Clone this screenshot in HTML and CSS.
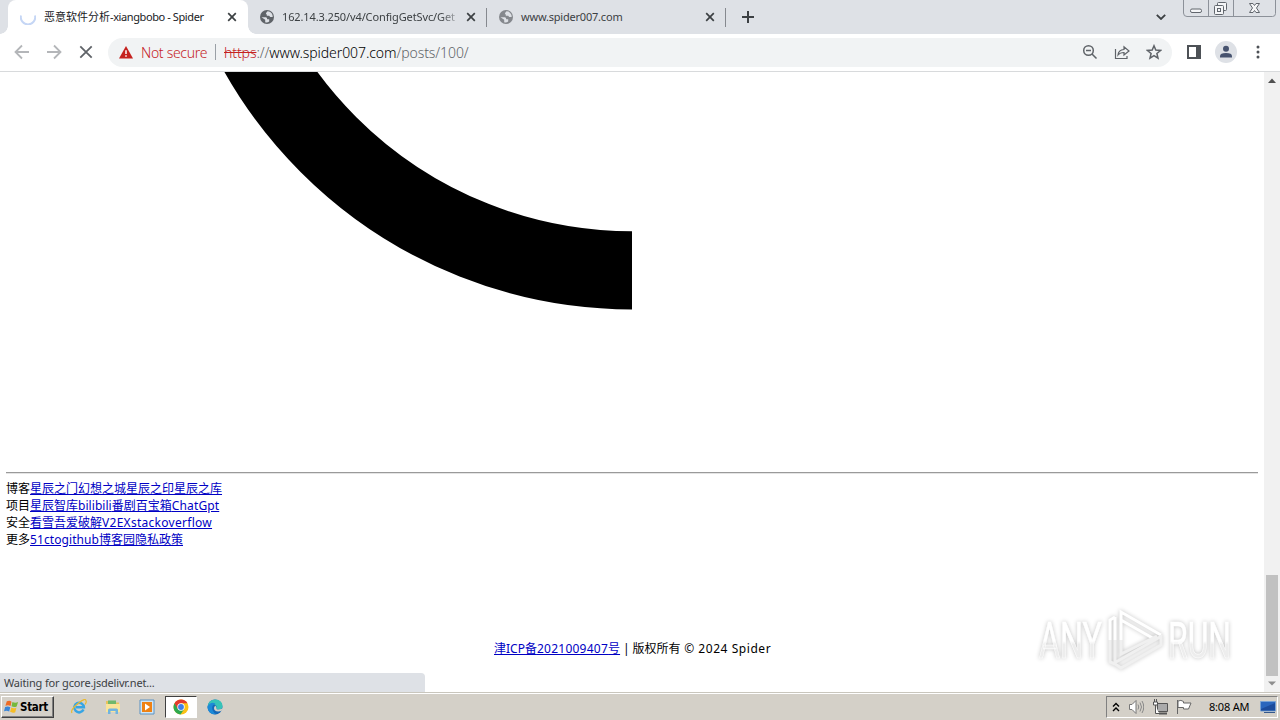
FILE: index.html
```html
<!DOCTYPE html>
<html lang="zh-CN">
<head>
<meta charset="utf-8">
<title>恶意软件分析-xiangbobo - Spider</title>
<link rel="stylesheet" href="styles.css">
</head>
<body>
<div class="screen">
  <header class="tabstrip">
    <div class="tab active">
      <svg class="fav" viewBox="0 0 16 16"><path d="M1 6.500A7.200 7.200 0 1 0 15 6.500" fill="none" stroke="#c5d6f5" stroke-width="2"/></svg>
      <span class="title t1"><span class="zh">恶意软件分析</span><span class="lat">-xiangbobo - Spider</span></span>
      <svg class="close" viewBox="0 0 10 10"><path d="M1.200 1.200l7.600 7.600M8.800 1.200L1.200 8.800"/></svg>
    </div>
    <div class="tab second">
      <svg class="fav" viewBox="0 0 16 16"><circle cx="8" cy="8" r="7" fill="#5f6368"/><path d="M2.500 8.200h4.300q1.500.2 1.400 2h2v2.400q-2 1.500-4 .7v-2.500zM8.500 2.300q3.500 0 5 3.600l.2 2h-2.500l-1-1.200H7.800V5.300h-1q.1-1.700 1.700-3z" fill="#dee1e6"/></svg>
      <span class="title t2">162.14.3.250/v4/ConfigGetSvc/Get</span>
      <svg class="close" viewBox="0 0 10 10"><path d="M1.200 1.200l7.600 7.600M8.800 1.200L1.200 8.800"/></svg>
    </div>
    <div class="tab third">
      <svg class="fav" viewBox="0 0 16 16"><circle cx="8" cy="8" r="7" fill="#85888d"/><path d="M2.500 8.200h4.300q1.500.2 1.400 2h2v2.400q-2 1.500-4 .7v-2.500zM8.500 2.300q3.500 0 5 3.600l.2 2h-2.500l-1-1.200H7.800V5.300h-1q.1-1.700 1.700-3z" fill="#dee1e6"/></svg>
      <span class="title t3">www.spider007.com</span>
      <svg class="close" viewBox="0 0 10 10"><path d="M1.200 1.200l7.600 7.600M8.800 1.200L1.200 8.800"/></svg>
    </div>
    <svg class="newtab" viewBox="0 0 12 12"><path d="M6 0v12M0 6h12"/></svg>
    <svg class="chev" viewBox="0 0 10 6"><path d="M.8.8L5 5 9.200.8"/></svg>
    <svg class="winbtns" viewBox="0 0 97 17">
      <path d="M.5 0v13q0 3.500 3.500 3.500h85.500q3 0 3-3V0M25.500 0v16M50.500 0v16" fill="none" stroke="#8c9199"/>
      <g fill="#f4f5f7" stroke="#61666d"><rect x="7.500" y="9" width="11" height="3.500" rx="1.500"/><rect x="34.500" y="2.500" width="9" height="8" rx="1"/><rect x="31.500" y="5.500" width="9" height="9" rx="1"/><rect x="34.500" y="8.500" width="3" height="3"/><path d="M66.500 3.500h3.500l1.500 2 1.500-2h3.500l-3 4.500 3 4.500H73l-1.500-2-1.500 2h-3.500l3-4.500z"/></g>
    </svg>
  </header>

  <nav class="toolbar">
    <svg class="nav" viewBox="0 0 16 16"><path d="M15 8H2M8 1.500L1.500 8 8 14.500" stroke="#b4b6b9"/></svg>
    <svg class="nav" viewBox="0 0 16 16"><path d="M1 8h13M8 1.500L14.500 8 8 14.500" stroke="#b4b6b9"/></svg>
    <svg class="nav" viewBox="0 0 16 16"><path d="M2.300 2.300l11.400 11.400M13.700 2.300L2.300 13.700" stroke="#5f6368"/></svg>
    <div class="omnibox">
      <svg class="warn" viewBox="0 0 14 13"><path d="M7 0l7 12.500H0z" fill="#c5221f"/><path d="M7 4.300v3.700M7 9.200v1.600" stroke="#fff" stroke-width="1.500"/></svg>
      <span class="insecure">Not secure</span>
      <span class="sep"></span>
      <span class="url"><span class="scheme">https</span><span class="dim">://</span>www.spider007.com<span class="dim">/posts/100/</span></span>
      <svg class="act zoomout" viewBox="0 0 16 16"><circle cx="6.500" cy="6.500" r="4.800"/><path d="M4 6.500h5M10 10l4.500 4.500"/></svg>
      <svg class="act share" viewBox="0 0 16 16"><path d="M1.500 5v9.500h11.500V12M4 11q.4-5 6-5.500V2.700L15 7l-5 4V8.500Q6 8.500 4 11z"/></svg>
      <svg class="act star" viewBox="0 0 16 16"><path d="M8 1.800l1.800 4.300 4.700.4-3.600 3 1.100 4.600L8 11.700l-4 2.400 1.100-4.600-3.600-3 4.700-.4z"/></svg>
    </div>
    <svg class="panel" viewBox="0 0 14 14"><path d="M1 1h12v12H1z" fill="none" stroke="#4d5156" stroke-width="2"/><path d="M9 0h5v14H9z" fill="#4d5156"/></svg>
    <svg class="avatar" viewBox="0 0 22 22"><circle cx="11" cy="11" r="11" fill="#dee1e6"/><circle cx="11" cy="7.800" r="3" fill="#47536f"/><path d="M5 16.500v-1.300q0-3.200 6-3.200t6 3.200v1.300z" fill="#47536f"/></svg>
    <svg class="more" viewBox="0 0 4 14"><circle cx="2" cy="2" r="1.500"/><circle cx="2" cy="7" r="1.500"/><circle cx="2" cy="12" r="1.500"/></svg>
  </nav>

  <div class="viewport">
    <main class="page">
      <svg class="arc" viewBox="0 0 632 400"><circle cx="632" cy="-231" r="429.300" fill="none" stroke="#000" stroke-width="78.200"/></svg>
      <hr class="rule">
      <div class="links">
        <div class="row">博客<a>星辰之门幻想之城星辰之印星辰之库</a></div>
        <div class="row">项目<a>星辰智库<span class="l1">bilibili</span>番剧百宝箱<span class="l2">ChatGpt</span></a></div>
        <div class="row">安全<a>看雪吾爱破解<span class="l3">V2EXstackoverflow</span></a></div>
        <div class="row">更多<a><span class="l4">51ctogithub</span>博客园隐私政策</a></div>
      </div>
      <footer class="footer"><a>津ICP备<span class="f2">2021009407</span>号</a><span class="f3"> | </span>版权所有<span class="f4"> © 2024 Spider</span></footer>
    </main>
    <div class="scrollbar">
      <svg class="arrow" viewBox="0 0 16 16"><path d="M4 11l4-4.500 4 4.500z" fill="#505050"/></svg>
      <div class="thumb"></div>
      <svg class="arrow" viewBox="0 0 16 16"><path d="M4 5.500l4 4 4-4z" fill="#8d8d8d"/></svg>
    </div>
    <div class="status">Waiting for gcore.jsdelivr.net...</div>
    <svg class="watermark" viewBox="0 0 210 80">
      <defs><linearGradient id="fade" x1="0" y1="0" x2="0" y2="1"><stop offset=".5" stop-color="#fff"/><stop offset=".56" stop-color="#ededed"/></linearGradient></defs>
      <g class="mark">
        <text x="9" y="58" textLength="63" lengthAdjust="spacingAndGlyphs">ANY</text>
        <text x="138" y="58" textLength="63" lengthAdjust="spacingAndGlyphs">RUN</text>
        <path d="M80 40V20l5-3M85 40V17M91 40V12l40 23M91 20l35 20"/>
        <path class="low" d="M80 40v22l5 2M85 40v24l6 4 40-23V35M91 40v14l36-18M86 62l44-25"/>
      </g>
    </svg>
  </div>

  <div class="taskbar">
    <div class="start">
      <svg viewBox="0 0 16 16"><path d="M3 2.500q3-1.500 5 .3L7 7.500Q4.500 6 1.500 7.300z" fill="#ee6c25"/><path d="M9 3.300q3 1.500 6 0L13.500 8q-3 1.200-5.500-.3z" fill="#76b83b"/><path d="M1.200 8.500q3-1.200 5.500.3l-1.200 4.500Q3 12 0 13z" fill="#3a86d8"/><path d="M7.800 9q2.500 1.400 5.400.2L12 14q-2.800 1.200-5.500-.3z" fill="#f6bd25"/></svg>
      <span>Start</span>
    </div>
    <div class="quick">
      <svg viewBox="0 0 16 16"><path d="M12.500 10.500a4.800 4.800 0 1 1 .4-2.200H5" fill="none" stroke="#37a5e4" stroke-width="2.500"/><path d="M1 14Q-1 11 7 4.500T15 2q.8 1-1 3.500" fill="none" stroke="#e9b92f" stroke-width="1.200"/></svg>
    </div>
    <div class="quick">
      <svg viewBox="0 0 16 16"><path d="M1 2h5l1 1.500h7V13H1z" fill="#e8c25c"/><path d="M3 1.500h8V6H3z" fill="#6fb86c"/><path d="M1 5h14v8H1z" fill="#f9e49a"/><path d="M3 15v-4q0-1.500 1.500-1.500h7Q13 9.500 13 11v4h-2.500v-3h-5v3z" fill="#71b4df"/></svg>
    </div>
    <div class="quick">
      <svg viewBox="0 0 16 16"><path d="M1 1h14v14H1z" fill="#cfe5f5" stroke="#5b93c4"/><path d="M3 3h10v10H3z" fill="#ee8214"/><path d="M6 4.500l5 3.500-5 3.500z" fill="#fff"/></svg>
    </div>
    <div class="quick pressed">
      <svg viewBox="0 0 16 16"><circle cx="8" cy="8" r="7.500" fill="#fbc116"/><path d="M1.500 4.250A7.500 7.500 0 0 0 7.500 15.500L11.250 9.900 8 8H4.750z" fill="#2da94f"/><path d="M1.500 4.250A7.500 7.500 0 0 1 14.500 4.250H8L4.750 9.900z" fill="#e33b2e"/><circle cx="8" cy="8" r="3.700" fill="#fff"/><circle cx="8" cy="8" r="2.900" fill="#3f7fe8"/></svg>
    </div>
    <div class="quick">
      <svg viewBox="0 0 16 16"><circle cx="8" cy="8" r="7.500" fill="#1568b8"/><path d="M.6 7.500Q1.500.5 8.500.5q6.800.5 7 6.500 0 3.500-4 3.500-2.500 0-2-1.500Q10 5.500 6 5.200 2.500 5 .6 7.500z" fill="#36c3b8"/><path d="M.6 7.500Q3.500 2 8.500 4.500 4 6 5.500 11q1 3 4 4.200Q2 16 .6 9z" fill="#1c8ad8"/><path d="M7 9q0 4.500 7.500 3L16 8.500q-1 2-4.500 2-2.500 0-2-1.500L8.500 6.500Q7 7.500 7 9z" fill="#d4d0c8"/></svg>
    </div>
    <div class="tray">
      <svg class="up" viewBox="0 0 8 10"><path d="M1 4.500l3-3 3 3M1 9l3-3 3 3"/></svg>
      <svg class="ti" viewBox="0 0 16 16"><path d="M1.500 5.500h2.500l4-4v13l-4-4H1.500z" fill="#fff" stroke="#777"/><path d="M10 5.500q1.500 2.500 0 5M12 3.500q3 4.500 0 9M14 2q3.500 6 0 12" fill="none" stroke="#888"/></svg>
      <svg class="ti" viewBox="0 0 16 16"><path d="M5.500 4.500h10v8h-10z" fill="#aaa" stroke="#555"/><path d="M7 14.500h8" stroke="#555" stroke-width="2"/><path d="M1.500 3v3h4V3zM2.500 0v3M4.500 0v3M3.500 6v8.500H7" fill="#fff" stroke="#555"/></svg>
      <svg class="ti" viewBox="0 0 16 16"><path d="M1.500 1v14M2 2q3-1.500 5.500.5v1.500h7.500L12.500 10H7.500V8.500H2z" fill="#fff" stroke="#666"/></svg>
      <span class="clock">8:08 AM</span>
      <svg class="desk" viewBox="0 0 16 14"><path d="M.5 1.500h15v9.500H.5z" fill="#2b66bd" stroke="#79a2d4"/><path d="M1 9L15 3v7.500H1z" fill="#1d4c9c"/><path d="M4 12.500h11" stroke="#35588c"/></svg>
    </div>
  </div>
</div>
</body>
</html>
```
FILE: styles.css
```css
* { box-sizing: border-box; }
body { margin: 0; font-family: "Noto Sans", "Noto Sans CJK SC", sans-serif; font-size: 12px; color: #000; }
svg { display: block; flex: none; }
.screen { width: 1280px; height: 720px; overflow: hidden; display: flex; flex-direction: column; background: #fff; }

.tabstrip { height: 34px; flex: none; display: flex; align-items: center; background: #dee1e6; color: #3c4043; }
.tab { display: flex; align-items: center; height: 34px; flex: none; }
.active { width: 240px; margin-left: 8px; padding-left: 12px; background: #fff; border-radius: 8px 8px 0 0; color: #202124; position: relative; }
.active::before, .active::after { content: ""; position: absolute; bottom: 0; width: 8px; height: 8px; }
.active::before { left: -8px; background: radial-gradient(circle at 0 0, #dee1e6 7.5px, #fff 8px); }
.active::after { right: -8px; background: radial-gradient(circle at 100% 0, #dee1e6 7.5px, #fff 8px); }
.second, .third { width: 239px; padding-left: 11px; }
.second::after, .third::after { content: ""; width: 1px; height: 19px; background: #86898f; margin-left: auto; }
.fav { width: 16px; height: 16px; margin-right: 8px; }
.second .fav, .third .fav { margin-right: 7px; }
.title { width: 178px; height: 18px; line-height: 18px; white-space: nowrap; flex: none; font-size: 11px; margin-right: 6px; }
.t1 { width: 183px; margin-right: 0; }
.lat { letter-spacing: -.4px; }
.t2 { letter-spacing: -.12px; -webkit-mask-image: linear-gradient(90deg, #000 158px, transparent 182px); mask-image: linear-gradient(90deg, #000 158px, transparent 182px); }
.t3 { letter-spacing: -.2px; }
.close { width: 10px; height: 10px; fill: none; stroke: #3c4043; stroke-width: 1.7; }
.newtab { width: 12px; height: 12px; margin-left: 16px; fill: none; stroke: #3c4043; stroke-width: 2; }
.chev { width: 10px; height: 6px; margin-left: auto; fill: none; stroke: #3c4043; stroke-width: 1.8; }
.winbtns { width: 97px; height: 17px; margin-left: 17px; align-self: flex-start; }

.toolbar { height: 38px; flex: none; display: flex; align-items: center; border-bottom: 1px solid #d8dadc; padding: 0 20px 1px 14px; }
.nav { width: 16px; height: 16px; margin-right: 16px; fill: none; stroke-width: 1.8; }
.nav + .nav + .nav { margin-right: 14px; }
.omnibox { width: 1064px; height: 29px; border-radius: 15px; background: #f1f3f4; display: flex; align-items: center; padding: 0 10px 0 11px; font-size: 14px; white-space: nowrap; }
.warn { width: 14px; height: 13px; margin-right: 8px; }
.insecure { color: #c5221f; width: 74px; letter-spacing: -.3px; font-weight: 300; }
.sep { width: 1px; height: 16px; background: #9aa0a6; margin-right: 8px; }
.url { color: #000; letter-spacing: -.08px; font-weight: 300; }
.scheme { color: #c5221f; text-decoration: line-through; }
.dim { color: #5f6368; }
.act { width: 16px; height: 16px; fill: none; stroke: #5f6368; stroke-width: 1.5; margin-left: 16px; }
.zoomout { margin-left: auto; }
.share { stroke-width: 1.2; }
.panel { width: 14px; height: 14px; margin-left: 15px; }
.avatar { width: 22px; height: 22px; margin-left: 14px; }
.more { width: 4px; height: 14px; margin-left: 19px; fill: #4d5156; }

.viewport { height: 620px; flex: none; position: relative; display: flex; }
.page { width: 1264px; line-height: 17px; }
.arc { width: 632px; height: 400px; }
.rule { margin: 0 6px 6px; border: 0; border-top: 1px solid #9a9a9a; border-bottom: 1px solid #e4e4e4; height: 2px; }
.links { padding-left: 6px; height: 160px; }
.row { height: 17px; white-space: nowrap; }
.page a { color: #0000c4; text-decoration: underline; }
.l1 { letter-spacing: .05px; }
.l2 { letter-spacing: .13px; }
.l3 { letter-spacing: .28px; }
.l4 { letter-spacing: .08px; }
.f2 { letter-spacing: .25px; }
.f3 { letter-spacing: -.15px; }
.f4 { letter-spacing: .55px; }
.footer { width: 1264px; padding-left: 494px; white-space: nowrap; }

.scrollbar { width: 16px; background: #f1f1f1; display: flex; flex-direction: column; align-items: center; }
.arrow { width: 16px; height: 16px; }
.thumb { width: 12px; height: 101px; margin-top: auto; background: #c1c1c1; }
.status { position: absolute; left: 0; bottom: 0; width: 425px; height: 19px; background: #dee1e6; border-top-right-radius: 4px; padding-left: 4px; line-height: 20px; font-size: 11px; letter-spacing: -.17px; color: #3c4043; }
.watermark { position: absolute; left: 1030px; top: 528px; width: 210px; height: 80px; }
.mark { fill: url(#fade); stroke: #fff; stroke-width: .6; filter: drop-shadow(0 0 2px rgba(0,0,0,.24)); }
.mark text { font-family: Roboto, sans-serif; font-size: 50px; }
.mark path { fill: none; stroke: #fff; stroke-width: 3; }
.mark .low { stroke: #f0f0f0; }

.taskbar { height: 28px; flex: none; display: flex; align-items: center; background: #d4d0c8; border-top: 1px solid #c9c6bd; box-shadow: inset 0 1px #fff; padding: 1px 2px 1px 1px; }
.start { width: 53px; height: 22px; display: flex; align-items: center; padding-left: 2px; border: 1px solid; border-color: #fff #404040 #404040 #fff; box-shadow: inset -1px -1px #808080; margin-right: 9px; }
.start svg { width: 15px; height: 15px; margin-right: 1px; }
.start span { font: bold 11.5px "DejaVu Sans Condensed", sans-serif; letter-spacing: -.3px; }
.quick { width: 32px; height: 22px; margin-right: 2px; display: flex; align-items: center; justify-content: center; }
.quick svg { width: 16px; height: 16px; }
.pressed { background: #fff; border: 1px solid; border-color: #404040 #fff #fff #404040; }
.tray { width: 172px; height: 22px; margin-left: auto; border: 1px solid; border-color: #808080 #fff #fff #808080; display: flex; align-items: center; padding-left: 5px; }
.up { width: 8px; height: 10px; fill: none; stroke: #000; stroke-width: 1.4; margin-right: 8px; }
.ti { width: 16px; height: 16px; margin-right: 8px; }
.clock { font-size: 11px; width: 48px; margin-left: 9px; letter-spacing: -.2px; white-space: nowrap; }
.desk { width: 16px; height: 14px; margin-left: 3px; }
```
